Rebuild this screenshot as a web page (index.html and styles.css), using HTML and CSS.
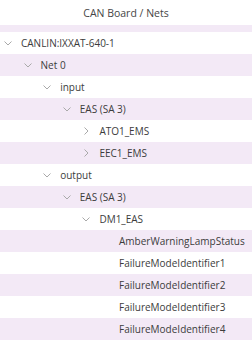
FILE: index.html
```html
<!DOCTYPE html>
<html lang="en">
<head>
    <meta charset="UTF-8">
    <meta name="viewport" content="width=device-width, initial-scale=1.0">
    <title>CAN Board / Nets</title>
    <link rel="stylesheet" href="styles.css">
</head>
<body>
    <div class="panel">
        <div class="panel-header">CAN Board / Nets</div>

        <ul class="tree">
            <li class="node lvl-0"><span class="toggle open"></span><span class="label">CANLIN:IXXAT-640-1</span></li>
            <li class="node lvl-1"><span class="toggle open"></span><span class="label">Net 0</span></li>
            <li class="node lvl-2"><span class="toggle open"></span><span class="label">input</span></li>
            <li class="node lvl-3"><span class="toggle open"></span><span class="label">EAS (SA 3)</span></li>
            <li class="node lvl-4"><span class="toggle closed"></span><span class="label">ATO1_EMS</span></li>
            <li class="node lvl-4"><span class="toggle closed"></span><span class="label">EEC1_EMS</span></li>
            <li class="node lvl-2"><span class="toggle open"></span><span class="label">output</span></li>
            <li class="node lvl-3"><span class="toggle open"></span><span class="label">EAS (SA 3)</span></li>
            <li class="node lvl-4"><span class="toggle open"></span><span class="label">DM1_EAS</span></li>
            <li class="node lvl-5"><span class="toggle"></span><span class="label">AmberWarningLampStatus</span></li>
            <li class="node lvl-5"><span class="toggle"></span><span class="label">FailureModeIdentifier1</span></li>
            <li class="node lvl-5"><span class="toggle"></span><span class="label">FailureModeIdentifier2</span></li>
            <li class="node lvl-5"><span class="toggle"></span><span class="label">FailureModeIdentifier3</span></li>
            <li class="node lvl-5"><span class="toggle"></span><span class="label">FailureModeIdentifier4</span></li>
        </ul>
    </div>

    <script>
        // draw the chevrons once, the markup only says open / closed
        const chevronDown = '<svg width="8" height="5" viewBox="0 0 8 5"><path d="M0.5 0.5 L4 4 L7.5 0.5" fill="none" stroke="#a9a9a9" stroke-width="1"/></svg>';
        const chevronRight = '<svg width="5" height="8" viewBox="0 0 5 8"><path d="M0.5 0.5 L4 4 L0.5 7.5" fill="none" stroke="#a9a9a9" stroke-width="1"/></svg>';

        document.querySelectorAll('.toggle.open').forEach(t => t.innerHTML = chevronDown);
        document.querySelectorAll('.toggle.closed').forEach(t => t.innerHTML = chevronRight);
    </script>
</body>
</html>
```

FILE: styles.css
```css
html, body {
    margin: 0;
    padding: 0;
    background-color: #fff;
}

.panel {
    width: 252px;
    font-family: "Open Sans", "Noto Sans", sans-serif;
    font-size: 10px;
    color: #3c3c3c;
}

.panel-header {
    height: 25px;
    display: flex;
    align-items: center;
    justify-content: center;
    font-size: 10.5px;
    color: #454545;
    border-bottom: 7px solid #f3e9f6;
}

.tree {
    list-style: none;
    margin: 0;
    padding: 0;
}

.node {
    height: 22px;
    display: flex;
    align-items: center;
    white-space: nowrap;
}

.node:nth-child(even) {
    background-color: #f3e9f6;
}

.toggle {
    flex-shrink: 0;
    width: 10px;
    height: 22px;
    display: flex;
    align-items: center;
    justify-content: center;
    margin-right: 8px;
}

.toggle svg {
    display: block;
}

.lvl-0 { padding-left: 3px; }
.lvl-1 { padding-left: 22.6px; }
.lvl-2 { padding-left: 42.2px; }
.lvl-3 { padding-left: 61.8px; }
.lvl-4 { padding-left: 81.4px; }
.lvl-5 { padding-left: 101px; }
```
